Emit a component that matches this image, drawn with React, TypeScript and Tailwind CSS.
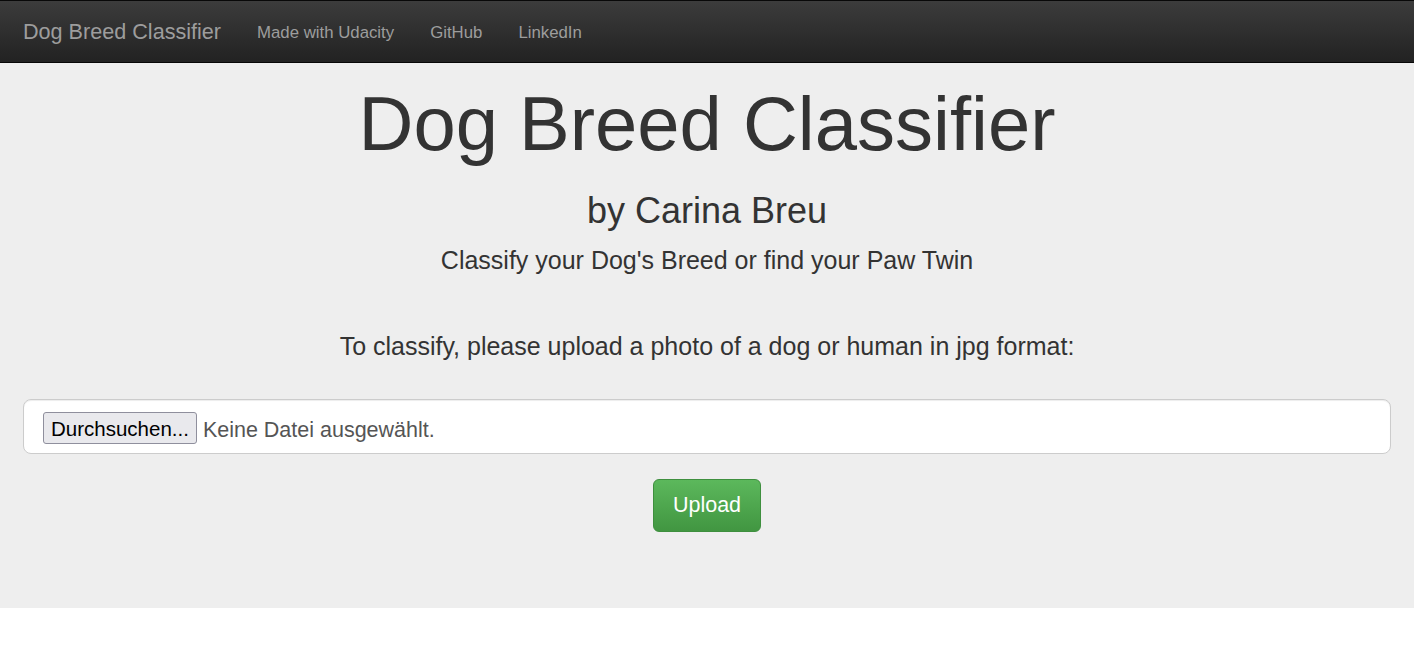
export default function App() {
  return (
    <div className="min-h-screen bg-white font-['Liberation_Sans',Arial,sans-serif] text-[#333]">
      <nav className="flex h-[63px] items-center border-y border-[#080808] bg-gradient-to-b from-[#3c3c3c] to-[#222] px-[23px]">
        <a className="pt-[2px] text-[21.6px] text-[#9d9d9d]" href="#">
          Dog Breed Classifier
        </a>
        <ul className="ml-[36px] flex gap-[36px] pt-[2px] text-[16.8px] text-[#9d9d9d]">
          <li>
            <a href="#">Made with Udacity</a>
          </li>
          <li>
            <a href="#">GitHub</a>
          </li>
          <li>
            <a href="#">LinkedIn</a>
          </li>
        </ul>
      </nav>

      <section className="bg-[#eee] px-[23px] pb-[76px] text-center">
        <h1 className="pt-[21px] text-[76px] leading-[80px]">Dog Breed Classifier</h1>
        <h2 className="mt-[27px] text-[36px] leading-[40px]">by Carina Breu</h2>
        <p className="mt-[15px] text-[25px] leading-[28px]">
          Classify your Dog's Breed or find your Paw Twin
        </p>
        <p className="mt-[57px] text-[25px] leading-[30px]">
          To classify, please upload a photo of a dog or human in jpg format:
        </p>

        <div className="mt-[38px] flex h-[55px] items-center rounded-[8px] border border-[#ccc] bg-white px-[19px] pt-[2px] shadow-[inset_0_1px_1px_rgba(0,0,0,0.075)]">
          <span className="flex h-[32px] items-center rounded-[3px] border border-[#8f8f9d] bg-[#e9e9ed] px-[7px] pt-[4px] text-[20.5px] text-black">
            Durchsuchen...
          </span>
          <span className="ml-[6px] pt-[6px] text-[21.5px] text-[#555]">Keine Datei ausgewählt.</span>
        </div>

        <button className="mt-[25px] h-[53px] rounded-[6px] border border-[#3e8f3e] bg-gradient-to-b from-[#5cb85c] to-[#419641] px-[19px] text-[21.5px] text-white">
          Upload
        </button>
      </section>
    </div>
  );
}
